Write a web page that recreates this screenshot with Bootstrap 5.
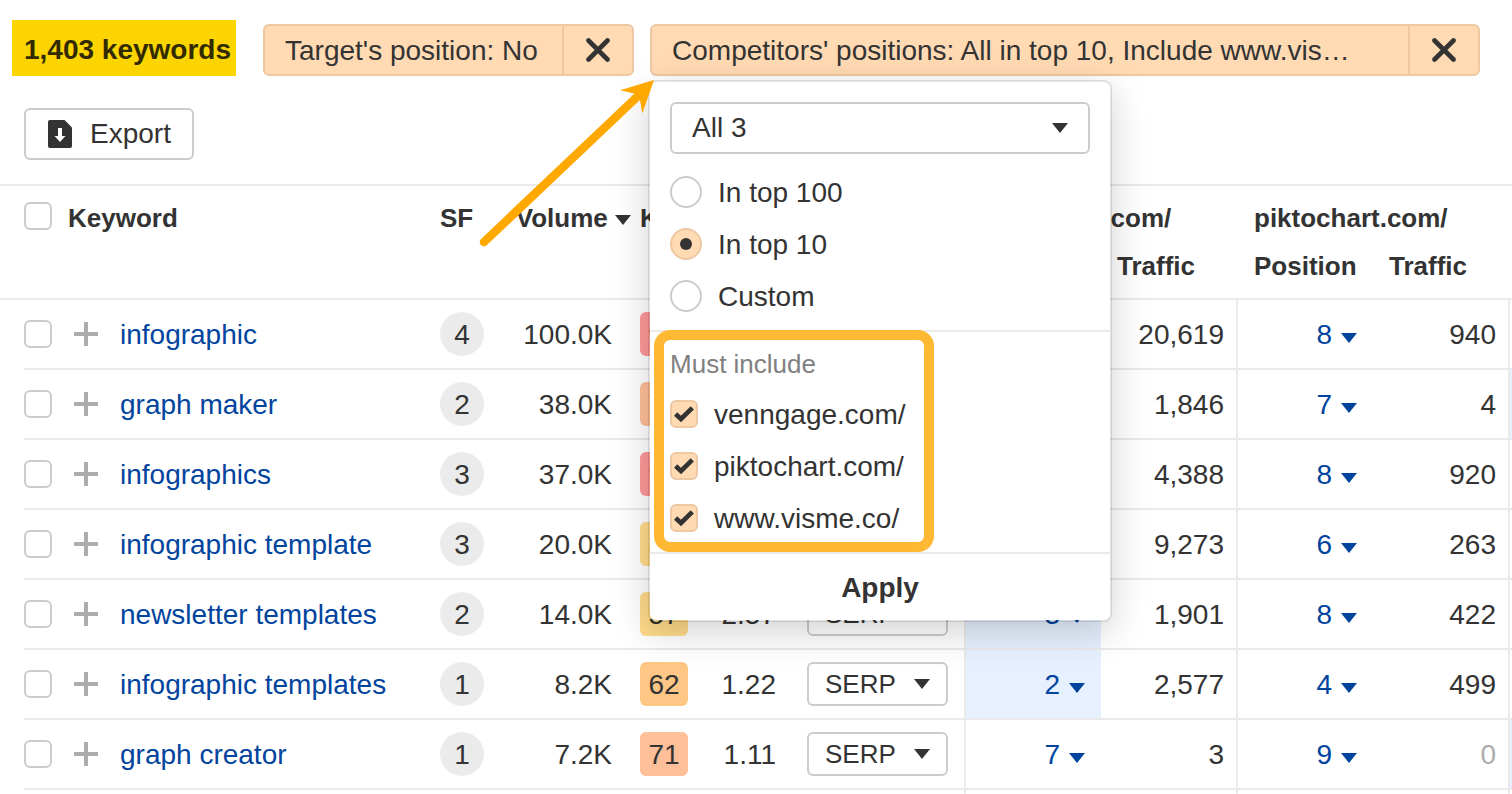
<!DOCTYPE html>
<html lang="en">
<head>
<meta charset="utf-8">
<meta name="viewport" content="width=device-width, initial-scale=1">
<title>Content gap keywords</title>
<link href="https://cdn.jsdelivr.net/npm/bootstrap@5.3.0/dist/css/bootstrap.min.css" rel="stylesheet">
<style>
:root{--ink:#333;--line:#eaeaea;--edge:#ccc;--peach:#ffdab3;--peach-edge:#edc8a2;--link:#00449e}
body{font-family:"Liberation Sans",Arial,sans-serif;font-size:28px;line-height:36px;color:var(--ink);background:#fff}
button,select{color:inherit;font:inherit}
.tally{font-size:28px;line-height:36px;padding:12px 5px 8px 12px;background:#fcd500;color:#332b00}
.topbar{padding:20px 32px 0 12px}
.chip{height:52px;background:var(--peach);border:2px solid var(--peach-edge);border-radius:6px}
.chip-first{min-width:371px;margin-left:27px}
.chip-label{border:0;background:none;padding:2px 20px 0;text-align:left;white-space:nowrap}
.chip-close{width:70px;border:0;border-left:2px solid var(--peach-edge);background:none;padding:0}
.outline-btn{background:#fff;border:2px solid var(--edge);border-radius:6px}
.export-btn{height:52px;min-width:170px;padding:0 20px 0 22px;gap:18px}
.toolbar{padding:32px 24px 24px}

.popup{position:absolute;top:56px;left:-2px;z-index:10;width:464px;background:#fff;background-clip:padding-box;border:2px solid rgba(0,0,0,.1);border-radius:8px;box-shadow:0 10px 36px rgba(0,0,0,.18)}
.popup .form-select{height:52px;font-size:28px;line-height:36px;padding:0 48px 0 20px;border:2px solid var(--edge);border-radius:6px;color:var(--ink);background-image:url("data:image/svg+xml,%3Csvg xmlns='http://www.w3.org/2000/svg' viewBox='0 0 16 10'%3E%3Cpath fill='%23333' d='M0 0h16L8 10z'/%3E%3C/svg%3E");background-size:16px 10px;background-position:right 20px center}
.choice{height:52px;gap:16px}
.choice label{padding-top:2px}
.form-check-input{flex:none;width:28px;height:28px;margin:0;border:2px solid var(--edge);background-size:contain}
.form-check-input[type=checkbox]{border-radius:6px}
.form-check-input[type=radio]{width:32px;height:32px}
.form-check-input:checked{background-color:var(--peach);border-color:var(--peach-edge)}
.form-check-input:checked[type=checkbox]{background-origin:border-box;background-image:url("data:image/svg+xml,%3Csvg xmlns='http://www.w3.org/2000/svg' viewBox='0 0 28 28'%3E%3Cpath fill='none' stroke='%23333' stroke-width='4.6' d='M5.600 14l5.400 5L22.300 7.800'/%3E%3C/svg%3E")}
.form-check-input:checked[type=radio]{background-origin:border-box;background-image:url("data:image/svg+xml,%3Csvg xmlns='http://www.w3.org/2000/svg' viewBox='0 0 32 32'%3E%3Ccircle cx='16' cy='16' r='6' fill='%23333'/%3E%3C/svg%3E")}
.popup-top{padding:20px 20px 8px}
.popup-list{padding:16px 20px 8px;border-top:2px solid var(--line)}
.popup-list legend{font-size:26px;line-height:32px;color:#808080;margin:0 0 8px}
.apply-btn{height:68px;border:0;border-top:2px solid var(--line);background:none;padding:2px 0 0}
.frame{position:absolute;top:-2px;left:4px;width:280px;height:222px;border:10px solid #ffb833;border-radius:16px;pointer-events:none}
.pointer{position:absolute;top:52px;left:-174px;z-index:11;pointer-events:none}

.keywords{table-layout:fixed;border-collapse:separate;border-spacing:0;margin:0;color:var(--ink);border-top:2px solid var(--line)}
.keywords>:not(caption)>tr>*{padding:0;border:0;background:none;box-shadow:none;color:inherit;white-space:nowrap;vertical-align:middle}
.keywords>thead>tr>th{font-size:26px;line-height:48px;height:48px;vertical-align:top}
.keywords>thead>tr:first-child>th{padding-top:8px;height:56px}
.keywords>thead>tr:last-child>th{padding-bottom:8px;height:58px;border-bottom:2px solid var(--line)}
.keywords>thead>tr>th[rowspan]{border-bottom:2px solid var(--line)}
.keywords>thead .form-check-input{display:block;margin-top:8px}
.keywords>thead>tr>th.site{padding-left:18px}
.keywords>thead>tr>th.site-traffic{padding-left:16px}
.keywords>tbody>tr>td{height:70px;border-bottom:2px solid var(--line)}
.keywords>tbody>tr.next-row>td{height:4px;border-bottom:0}
.keywords>tbody>tr>td.gutter{border:0}
.keywords>tbody>tr>td.pos{border-left:2px solid var(--line);padding-right:16px;text-align:right}
.keywords>tbody>tr>td.traffic{padding-right:12px;text-align:right}
.keywords>tbody>tr>td.best{background:#e6f0fe}
.keywords>tbody>tr>td.vol{padding-right:28px;text-align:right}
.keywords>thead>tr>th.vol{padding-right:9px;text-align:right}
.keywords>tbody>tr>td.vol,.keywords>tbody>tr>td.traffic,.keywords>tbody>tr>td.pos,.keywords>tbody>tr>td.cpc{padding-top:2px}
.keywords>tbody>tr.next-row>td{padding:0}
.keywords .form-check-input{display:block}
.keywords a{color:var(--link);text-decoration:none}
.keyword-link{padding-top:2px}
.add-btn{border:0;background:none;padding:0 22px 0 6px;display:flex}
.sf{display:block;width:44px;height:44px;line-height:44px;padding-top:1px;border-radius:50%;background:#ebebeb;text-align:center}
.kd{display:block;height:44px;line-height:44px;padding-top:1px;border-radius:6px;text-align:center}
.kd-hard{background:#ff9999}.kd-71{background:#ffbf99}.kd-62{background:#ffc785}.kd-57{background:#ffdb8a}
.serp-btn{width:141px;height:44px;margin-left:31px;font-size:26px;padding:0 16px}
.caret{width:16px;height:10px;flex:none;fill:currentColor}
.pos .caret{margin-left:9px;vertical-align:1px;display:inline-block}
.none-yet{color:#adadad}
.c-gutter{width:24px}.c-check{width:44px}.c-sf{width:44px}.c-vol{width:156px}.c-kd{width:48px}.c-cpc{width:88px}.c-serp{width:188px}.c-pos{width:137px}.c-traffic{width:135px}.c-edge{width:4px}
</style>
</head>
<body>
<svg width="0" height="0" class="position-absolute" aria-hidden="true">
  <symbol id="down" viewBox="0 0 16 10"><path d="M0 0h16L8 10z"/></symbol>
  <symbol id="plus" viewBox="0 0 24 24"><path fill="#adadad" d="M10 0h4v10h10v4H14v10h-4V14H0v-4h10z"/></symbol>
  <symbol id="cross" viewBox="0 0 24 24"><path d="M2.500 2.500l19 19M21.500 2.500l-19 19" fill="none" stroke="#333" stroke-width="4.600" stroke-linecap="round"/></symbol>
</svg>

<header class="topbar d-flex align-items-start">
  <h1 class="tally fw-bold m-0 text-nowrap">1,403 keywords</h1>
  <div class="d-flex flex-grow-1 gap-3 pt-1">
    <div class="chip chip-first d-flex">
      <button type="button" class="chip-label flex-grow-1">Target's position: No</button>
      <button type="button" class="chip-close d-flex align-items-center justify-content-center" aria-label="Remove target filter"><svg width="24" height="24"><use href="#cross"/></svg></button>
    </div>
    <div class="position-relative flex-grow-1">
      <div class="chip d-flex">
        <button type="button" class="chip-label flex-grow-1">Competitors' positions: All in top 10, Include www.vis…</button>
        <button type="button" class="chip-close d-flex align-items-center justify-content-center" aria-label="Remove competitors filter"><svg width="24" height="24"><use href="#cross"/></svg></button>
      </div>

      <form class="popup">
        <div class="popup-top">
          <select class="form-select mb-2" aria-label="Competitors"><option>All 3</option></select>
          <div class="pt-1">
            <div class="choice d-flex align-items-center"><input class="form-check-input" type="radio" name="range" id="r100"><label for="r100">In top 100</label></div>
            <div class="choice d-flex align-items-center"><input class="form-check-input" type="radio" name="range" id="r10" checked><label for="r10">In top 10</label></div>
            <div class="choice d-flex align-items-center"><input class="form-check-input" type="radio" name="range" id="rc"><label for="rc">Custom</label></div>
          </div>
        </div>
        <fieldset class="popup-list position-relative">
          <legend>Must include</legend>
          <div class="choice d-flex align-items-center"><input class="form-check-input" type="checkbox" id="s1" checked><label for="s1">venngage.com/</label></div>
          <div class="choice d-flex align-items-center"><input class="form-check-input" type="checkbox" id="s2" checked><label for="s2">piktochart.com/</label></div>
          <div class="choice d-flex align-items-center"><input class="form-check-input" type="checkbox" id="s3" checked><label for="s3">www.visme.co/</label></div>
          <div class="frame"></div>
        </fieldset>
        <button type="button" class="apply-btn w-100 fw-bold d-block">Apply</button>
      </form>
      <svg class="pointer" width="184" height="176" viewBox="0 0 184 176" aria-hidden="true"><path d="M8 166L162 20" stroke="#ffa800" stroke-width="8.600" stroke-linecap="round"/><path d="M178 4L144 14.300L158 17.600L163.800 23L166.300 37.500z" fill="#ffa800"/></svg>
    </div>
  </div>
</header>

<div class="toolbar">
  <button type="button" class="outline-btn export-btn d-inline-flex align-items-center">
    <svg width="24" height="28" viewBox="0 0 24 28"><path fill="#333" d="M2 0h14.500L24 7.500V26a2 2 0 0 1-2 2H2a2 2 0 0 1-2-2V2a2 2 0 0 1 2-2z"/><path fill="#fff" d="M10 8h4v8h3.500L12 22l-5.500-6H10z"/></svg>
    Export
  </button>
</div>

<table class="table keywords w-100">
  <colgroup><col class="c-gutter"><col class="c-check"><col><col class="c-sf"><col class="c-vol"><col class="c-kd"><col class="c-cpc"><col class="c-serp"><col class="c-pos"><col class="c-traffic"><col class="c-pos"><col class="c-traffic"><col class="c-edge"></colgroup>
  <thead>
    <tr>
      <th rowspan="2"></th>
      <th rowspan="2"><input class="form-check-input" type="checkbox" aria-label="Select all"></th>
      <th rowspan="2">Keyword</th>
      <th rowspan="2">SF</th>
      <th rowspan="2" class="vol">Volume <svg class="caret"><use href="#down"/></svg></th>
      <th rowspan="2">KD</th>
      <th rowspan="2"></th>
      <th rowspan="2"></th>
      <th colspan="2" class="site">venngage.com/</th>
      <th colspan="2" class="site">piktochart.com/</th>
      <th rowspan="2"></th>
    </tr>
    <tr>
      <th class="site"></th><th class="site-traffic">Traffic</th>
      <th class="site">Position</th><th class="site-traffic">Traffic</th>
    </tr>
  </thead>
  <tbody>
    <tr>
      <td class="gutter"></td>
      <td><input class="form-check-input" type="checkbox" aria-label="Select infographic"></td>
      <td><div class="d-flex align-items-center"><button type="button" class="add-btn" aria-label="Add"><svg width="24" height="24"><use href="#plus"/></svg></button><a class="keyword-link" href="#">infographic</a></div></td>
      <td><span class="sf">4</span></td><td class="vol">100.0K</td><td><span class="kd kd-hard">91</span></td><td></td><td></td>
      <td class="pos"></td><td class="traffic">20,619</td>
      <td class="pos"><a href="#">8<svg class="caret"><use href="#down"/></svg></a></td><td class="traffic">940</td><td class="pos"></td>
    </tr>
    <tr>
      <td class="gutter"></td>
      <td><input class="form-check-input" type="checkbox" aria-label="Select graph maker"></td>
      <td><div class="d-flex align-items-center"><button type="button" class="add-btn" aria-label="Add"><svg width="24" height="24"><use href="#plus"/></svg></button><a class="keyword-link" href="#">graph maker</a></div></td>
      <td><span class="sf">2</span></td><td class="vol">38.0K</td><td><span class="kd kd-71">74</span></td><td></td><td></td>
      <td class="pos"></td><td class="traffic">1,846</td>
      <td class="pos"><a href="#">7<svg class="caret"><use href="#down"/></svg></a></td><td class="traffic">4</td><td class="pos best"></td>
    </tr>
    <tr>
      <td class="gutter"></td>
      <td><input class="form-check-input" type="checkbox" aria-label="Select infographics"></td>
      <td><div class="d-flex align-items-center"><button type="button" class="add-btn" aria-label="Add"><svg width="24" height="24"><use href="#plus"/></svg></button><a class="keyword-link" href="#">infographics</a></div></td>
      <td><span class="sf">3</span></td><td class="vol">37.0K</td><td><span class="kd kd-hard">91</span></td><td></td><td></td>
      <td class="pos"></td><td class="traffic">4,388</td>
      <td class="pos"><a href="#">8<svg class="caret"><use href="#down"/></svg></a></td><td class="traffic">920</td><td class="pos"></td>
    </tr>
    <tr>
      <td class="gutter"></td>
      <td><input class="form-check-input" type="checkbox" aria-label="Select infographic template"></td>
      <td><div class="d-flex align-items-center"><button type="button" class="add-btn" aria-label="Add"><svg width="24" height="24"><use href="#plus"/></svg></button><a class="keyword-link" href="#">infographic template</a></div></td>
      <td><span class="sf">3</span></td><td class="vol">20.0K</td><td><span class="kd kd-57">56</span></td><td></td><td></td>
      <td class="pos"></td><td class="traffic">9,273</td>
      <td class="pos"><a href="#">6<svg class="caret"><use href="#down"/></svg></a></td><td class="traffic">263</td><td class="pos"></td>
    </tr>
    <tr>
      <td class="gutter"></td>
      <td><input class="form-check-input" type="checkbox" aria-label="Select newsletter templates"></td>
      <td><div class="d-flex align-items-center"><button type="button" class="add-btn" aria-label="Add"><svg width="24" height="24"><use href="#plus"/></svg></button><a class="keyword-link" href="#">newsletter templates</a></div></td>
      <td><span class="sf">2</span></td><td class="vol">14.0K</td><td><span class="kd kd-57">57</span></td><td class="cpc text-end">2.57</td>
      <td><button type="button" class="outline-btn serp-btn d-flex align-items-center justify-content-between">SERP<svg class="caret"><use href="#down"/></svg></button></td>
      <td class="pos best"><a href="#">3<svg class="caret"><use href="#down"/></svg></a></td><td class="traffic">1,901</td>
      <td class="pos"><a href="#">8<svg class="caret"><use href="#down"/></svg></a></td><td class="traffic">422</td><td class="pos"></td>
    </tr>
    <tr>
      <td class="gutter"></td>
      <td><input class="form-check-input" type="checkbox" aria-label="Select infographic templates"></td>
      <td><div class="d-flex align-items-center"><button type="button" class="add-btn" aria-label="Add"><svg width="24" height="24"><use href="#plus"/></svg></button><a class="keyword-link" href="#">infographic templates</a></div></td>
      <td><span class="sf">1</span></td><td class="vol">8.2K</td><td><span class="kd kd-62">62</span></td><td class="cpc text-end">1.22</td>
      <td><button type="button" class="outline-btn serp-btn d-flex align-items-center justify-content-between">SERP<svg class="caret"><use href="#down"/></svg></button></td>
      <td class="pos best"><a href="#">2<svg class="caret"><use href="#down"/></svg></a></td><td class="traffic">2,577</td>
      <td class="pos"><a href="#">4<svg class="caret"><use href="#down"/></svg></a></td><td class="traffic">499</td><td class="pos"></td>
    </tr>
    <tr>
      <td class="gutter"></td>
      <td><input class="form-check-input" type="checkbox" aria-label="Select graph creator"></td>
      <td><div class="d-flex align-items-center"><button type="button" class="add-btn" aria-label="Add"><svg width="24" height="24"><use href="#plus"/></svg></button><a class="keyword-link" href="#">graph creator</a></div></td>
      <td><span class="sf">1</span></td><td class="vol">7.2K</td><td><span class="kd kd-71">71</span></td><td class="cpc text-end">1.11</td>
      <td><button type="button" class="outline-btn serp-btn d-flex align-items-center justify-content-between">SERP<svg class="caret"><use href="#down"/></svg></button></td>
      <td class="pos"><a href="#">7<svg class="caret"><use href="#down"/></svg></a></td><td class="traffic">3</td>
      <td class="pos"><a href="#">9<svg class="caret"><use href="#down"/></svg></a></td><td class="traffic"><span class="none-yet">0</span></td><td class="pos best"></td>
    </tr>
    <tr class="next-row">
      <td class="gutter"></td><td></td><td></td><td></td><td></td><td></td><td></td><td></td><td class="pos"></td><td></td><td class="pos"></td><td></td><td class="pos"></td>
    </tr>
  </tbody>
</table>
<script src="https://cdn.jsdelivr.net/npm/bootstrap@5.3.0/dist/js/bootstrap.bundle.min.js"></script>
</body>
</html>
